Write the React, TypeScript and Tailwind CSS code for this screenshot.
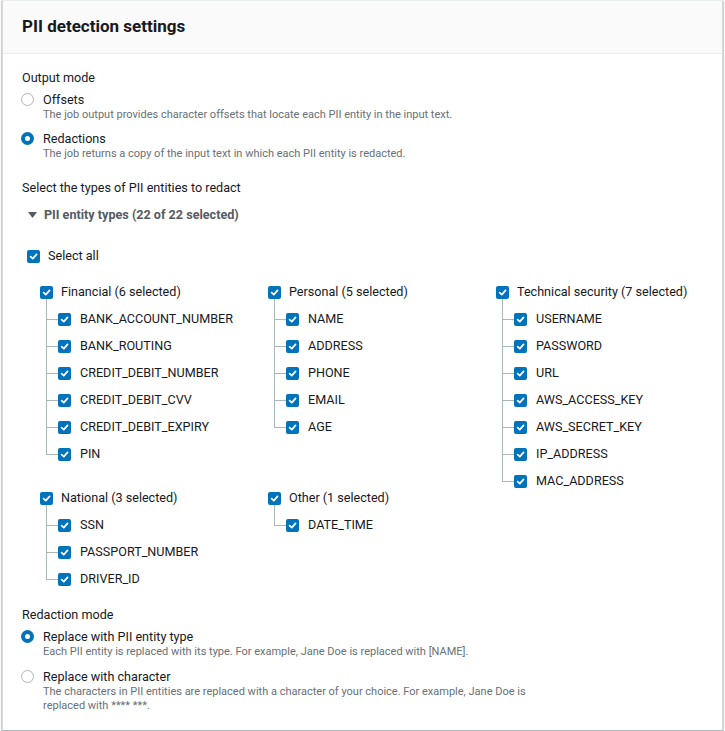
import { ReactNode } from "react";

type Group = { title: string; items: string[] };

const financial: Group = {
  title: "Financial (6 selected)",
  items: [
    "BANK_ACCOUNT_NUMBER",
    "BANK_ROUTING",
    "CREDIT_DEBIT_NUMBER",
    "CREDIT_DEBIT_CVV",
    "CREDIT_DEBIT_EXPIRY",
    "PIN",
  ],
};
const personal: Group = { title: "Personal (5 selected)", items: ["NAME", "ADDRESS", "PHONE", "EMAIL", "AGE"] };
const technical: Group = {
  title: "Technical security (7 selected)",
  items: ["USERNAME", "PASSWORD", "URL", "AWS_ACCESS_KEY", "AWS_SECRET_KEY", "IP_ADDRESS", "MAC_ADDRESS"],
};
const national: Group = { title: "National (3 selected)", items: ["SSN", "PASSPORT_NUMBER", "DRIVER_ID"] };
const other: Group = { title: "Other (1 selected)", items: ["DATE_TIME"] };

function Check() {
  return (
    <span className="flex h-[13px] w-[13px] shrink-0 items-center justify-center rounded-[2px] bg-[#0073bb]">
      <svg width="9" height="9" viewBox="0 0 10 10" fill="none">
        <path d="M1.8 5.2 L4.2 7.4 L8.4 2.6" stroke="white" strokeWidth="1.9" strokeLinecap="round" strokeLinejoin="round" />
      </svg>
    </span>
  );
}

function Radio({ on }: { on?: boolean }) {
  return on ? (
    <span className="mt-[2px] h-[13px] w-[13px] shrink-0 rounded-full border-[4px] border-[#0073bb] bg-white" />
  ) : (
    <span className="mt-[2px] h-[13px] w-[13px] shrink-0 rounded-full border border-[#aab7b8] bg-white" />
  );
}

function Option({ on, label, children }: { on?: boolean; label: string; children: ReactNode }) {
  return (
    <div className="flex gap-[9px] pl-[-1px]">
      <Radio on={on} />
      <div>
        <div className="text-[12.6px] leading-[17px] text-[#16191f]">{label}</div>
        <div className="text-[11px] leading-[14px] text-[#687078]">{children}</div>
      </div>
    </div>
  );
}

function GroupTree({ g, className }: { g: Group; className?: string }) {
  return (
    <div className={className}>
      <div className="flex h-[27px] items-center gap-[8px]">
        <Check />
        <span>{g.title}</span>
      </div>
      <div className="relative">
        <div className="absolute left-[6px] top-[-7px] bottom-[13px] w-px bg-[#aab7b8]" />
        {g.items.map((it) => (
          <div key={it} className="relative flex h-[27px] items-center gap-[9px] pl-[18px]">
            <div className="absolute left-[6px] top-[13px] h-px w-[12px] bg-[#aab7b8]" />
            <Check />
            <span>{it}</span>
          </div>
        ))}
      </div>
    </div>
  );
}

export default function App() {
  return (
    <div className="min-h-[731px] bg-white px-[2px]" style={{ fontFamily: "Roboto, 'Liberation Sans', sans-serif" }}>
      <div className="border border-t-[#eaeded] border-x-[#d5dbdb] border-b-[#aab7b8] shadow-[0_1px_1px_0_rgba(0,28,36,0.3),1px_1px_1px_0_rgba(0,28,36,0.15),-1px_1px_1px_0_rgba(0,28,36,0.15)]">
        <div className="flex h-[53px] items-center border-b border-[#eaeded] bg-[#fafafa] px-[19px]">
          <h2 className="text-[17px] font-bold text-[#16191f]">PII detection settings</h2>
        </div>

        <div className="px-[18px] pb-[17px] pt-[15px] text-[12.6px] text-[#16191f]">
          <div className="pl-px leading-[18px]">Output mode</div>
          <div className="mt-[4px] flex flex-col gap-[8px]">
            <Option label="Offsets">The job output provides character offsets that locate each PII entity in the input text.</Option>
            <Option on label="Redactions">The job returns a copy of the input text in which each PII entity is redacted.</Option>
          </div>

          <div className="mt-[18px] pl-px leading-[18px]">Select the types of PII entities to redact</div>
          <div className="mt-[9px] flex items-center gap-[7px] pl-[7px] font-bold text-[#545b64]">
            <svg width="9" height="8" viewBox="0 0 9 8">
              <path d="M0 1 L9 1 L4.5 7 Z" fill="#545b64" />
            </svg>
            <span>PII entity types (22 of 22 selected)</span>
          </div>

          <div className="mt-[18px] flex h-[27px] items-center gap-[8px] pl-[6px]">
            <Check />
            <span>Select all</span>
          </div>

          <div className="mt-[9px] grid grid-cols-[228px_228px_1fr] gap-y-[17px] pl-[19px]">
            <GroupTree g={financial} />
            <GroupTree g={personal} />
            <GroupTree g={technical} className="row-span-2" />
            <GroupTree g={national} />
            <GroupTree g={other} />
          </div>

          <div className="mt-[13px] pl-px leading-[18px]">Redaction mode</div>
          <div className="mt-[4px] flex flex-col gap-[9px]">
            <Option on label="Replace with PII entity type">
              Each PII entity is replaced with its type. For example, Jane Doe is replaced with [NAME].
            </Option>
            <Option label="Replace with character">
              The characters in PII entities are replaced with a character of your choice. For example, Jane Doe is
              <br />
              replaced with **** ***.
            </Option>
          </div>
        </div>
      </div>
    </div>
  );
}
